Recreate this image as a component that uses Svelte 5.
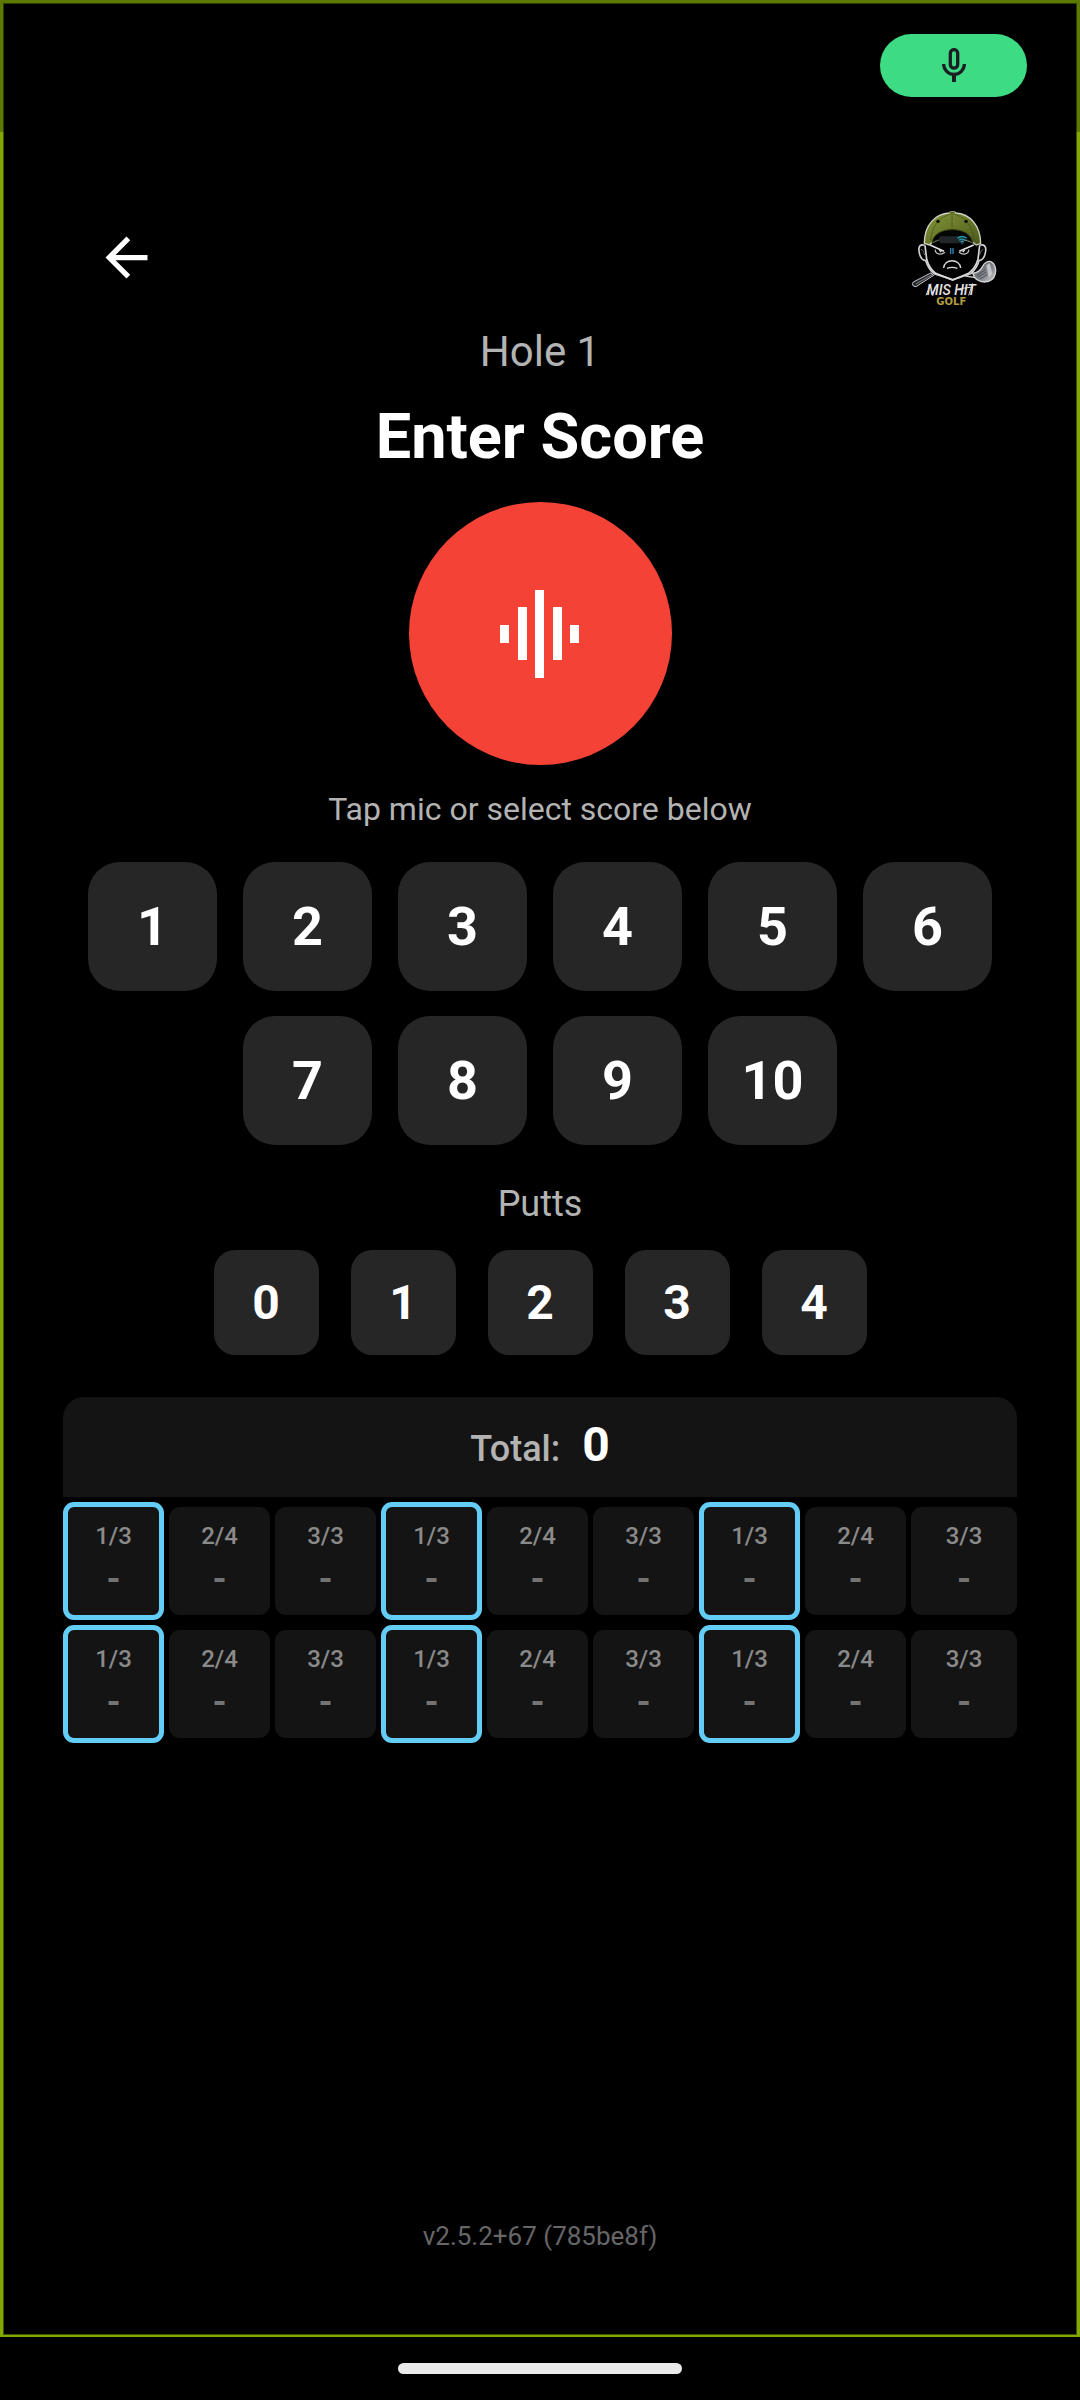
<script lang="ts">
	const scores = [1, 2, 3, 4, 5, 6, 7, 8, 9, 10];
	const puttOptions = [0, 1, 2, 3, 4];
	const version = 'v2.5.2+67 (785be8f)';

	// position on the card / par, repeated for each group of three holes
	const group = ['1/3', '2/4', '3/3'];
	const nine = [...group, ...group, ...group];
	const rows = [nine, nine];

	let score = $state<number | null>(null);
	let putts = $state<number | null>(null);
	let total = $derived(score ?? 0);
</script>

<div class="screen">
	<div class="frame">
		<div class="status-bar">
			<div class="mic-pill">
				<svg viewBox="0 0 24 36" width="24" height="36" fill="none" stroke="#1b1f23" stroke-width="3.3">
					<rect x="8.3" y="1.6" width="7.4" height="18.5" rx="3.7" />
					<path d="M1.6 16a10.4 10.4 0 0 0 20.8 0" />
					<path d="M12 27v7" stroke-width="4" />
				</svg>
			</div>
		</div>

		<main>
			<header>
				<button type="button" class="back" aria-label="Back">
					<svg viewBox="0 0 24 24" width="63" height="63" fill="#fff">
						<path d="M20 11H7.830l5.590-5.590L12 4l-8 8 8 8 1.410-1.410L7.830 13H20v-2z" />
					</svg>
				</button>

				<svg class="logo" viewBox="30 30 315 315" width="105" height="105" role="img" aria-label="Mis Hit Golf">
					<defs>
						<linearGradient id="cap" x1="0" y1="0" x2="1" y2="1">
							<stop offset="0" stop-color="#84973a" />
							<stop offset="0.5" stop-color="#69792a" />
							<stop offset="1" stop-color="#4a581a" />
						</linearGradient>
						<linearGradient id="club" x1="0" y1="0" x2="1" y2="1">
							<stop offset="0" stop-color="#55585e" />
							<stop offset="0.6" stop-color="#85888e" />
							<stop offset="1" stop-color="#d8d8da" />
						</linearGradient>
					</defs>

					<!-- golf club behind the head -->
					<path d="M70 261l52-27 9 7-53 34-8-2-3-7z" fill="#24262a" stroke="#c8c8c8" stroke-width="3" />
					<path d="M78 267l48-28" stroke="#696d73" stroke-width="4" />
					<path d="M226 243l30 5M232 233l24 2" stroke="#c8c8c8" stroke-width="4" />
					<path d="M249 235c13-2 23-10 29-21 5-11 16-17 25-14 12 5 16 22 13 36-4 17-17 25-33 25-15 0-31-9-34-26z" fill="url(#club)" stroke="#d4d4d4" stroke-width="4" />
					<path d="M289 211l10-6 8 31-10 14z" fill="#c4c5c9" />
					<path d="M260 242l26-18M263 247l25-15M270 252l22-13" stroke="#34373d" stroke-width="2" />

					<!-- head and ears -->
					<path d="M104 151c-13-5-19 4-17 17 2 16 8 28 20 29 5 15 13 29 25 39l56 18 54-18c13-11 21-25 25-39 12-1 18-13 20-29 2-14-5-22-18-17" fill="#000" stroke="#cfcfcf" stroke-width="5" stroke-linejoin="round" />
					<path d="M105 151l5 42c5 19 14 32 27 42l51 20 48-20c14-11 23-24 28-42l5-42" fill="none" stroke="#d7d7d7" stroke-width="5" />
					<path d="M93 163c5 0 8 7 11 17M280 163c-5 0-8 7-11 17" fill="none" stroke="#999" stroke-width="2" />

					<!-- backwards cap -->
					<path d="M103 145C103 89 137 56 178 54c1-5 18-5 19 0 43 2 74 38 75 91l-13 5c-16-13-37-20-73-20-35 0-55 7-69 20z" fill="url(#cap)" stroke="#d0d2c5" stroke-width="4" />
					<path d="M186 56v61M180 58c-34 9-55 39-58 79M194 58c35 10 55 40 58 79" fill="none" stroke="#354016" stroke-width="2" stroke-dasharray="5 2" />
					<path d="M126 143c5-27 30-39 61-39 34 0 57 15 61 39-18-11-41-14-62-14s-44 4-60 14z" fill="#050706" stroke="#303b12" stroke-width="3" />
					<path d="M177 55c2-7 17-7 19 0z" fill="#59671d" />
					<circle cx="144" cy="79" r="5" fill="#080a04" />
					<circle cx="228" cy="79" r="5" fill="#080a04" />
					<path d="M150 124h65l9 21h-73q-8-10-1-21z" fill="#20252a" />
					<path d="M202 130c9-7 19-7 28 0M207 136c6-5 12-5 18 0M212 141c3-3 6-3 9 0" fill="none" stroke="#249bb2" stroke-width="4" />
					<circle cx="216" cy="146" r="2" fill="#29a4bd" />

					<!-- face -->
					<path d="M120 150l42 19M251 150l-43 19" stroke="#e2e2e2" stroke-width="5" />
					<path d="M136 164c-1 14 17 17 29 8M236 164c1 14-17 17-29 8" fill="none" stroke="#bababa" stroke-width="4" />
					<path d="M148 166l6 5M224 166l-6 5" stroke="#eee" stroke-width="4" />
					<path d="M182 159v18M189 159v18" stroke="#3388b5" stroke-width="4" />
					<path d="M161 219c2-29 48-29 51 0M171 220q15-6 31 0" fill="none" stroke="#ddd" stroke-width="4" />

					<text class="logo-name" x="184" y="299" text-anchor="middle">MIS HIT</text>
					<path d="M108 301l15-35M248 265l-12 36M202 282l45-6M136 274l-8 29" stroke="#ddd" stroke-width="3" />
					<text class="logo-golf" x="184" y="330" text-anchor="middle">GOLF</text>
				</svg>
			</header>

			<p class="hole">Hole 1</p>
			<h1>Enter Score</h1>

			<button type="button" class="mic" aria-label="Speak score">
				<svg viewBox="0 0 80 88" width="80" height="88" fill="#fff">
					<path d="M0 35h9v18H0zM18 17h9v53h-9zM35 0h9v88h-9zM53 17h9v53h-9zM70 35h9v18h-9z" />
				</svg>
			</button>

			<p class="hint">Tap mic or select score below</p>

			<div class="scores">
				{#each scores as n}
					<button type="button" aria-pressed={score === n} onclick={() => (score = n)}>{n}</button>
				{/each}
			</div>

			<h2>Putts</h2>

			<div class="putts">
				{#each puttOptions as n}
					<button type="button" aria-pressed={putts === n} onclick={() => (putts = n)}>{n}</button>
				{/each}
			</div>

			<section class="card">
				<div class="total">
					<span>Total:</span>
					<strong>{total}</strong>
				</div>
				{#each rows as row}
					<ul>
						{#each row as label, i}
							<li class:active={i % 3 === 0}>
								<span class="label">{label}</span>
								<span class="value">-</span>
							</li>
						{/each}
					</ul>
				{/each}
			</section>
		</main>

		<footer>{version}</footer>
	</div>

	<div class="nav-bar">
		<div class="handle"></div>
	</div>
</div>

<style>
	:global(body) {
		background: #000;
	}

	.screen {
		min-height: 100vh;
		display: flex;
		flex-direction: column;
		background: #000;
		color: #fff;
		font-family: Roboto, 'Liberation Sans', sans-serif;
	}

	.frame {
		position: relative;
		flex: 1;
		display: flex;
		flex-direction: column;
		border: 3px solid #80a800;
		border-bottom-width: 2px;
		box-shadow: inset 0 0 0 1px #405400;
	}

	/* translucent system bar, it also dims the top of the frame */
	.status-bar {
		position: absolute;
		inset: -3px -3px auto;
		height: 132px;
		box-sizing: border-box;
		padding: 34px 53px 0;
		display: flex;
		justify-content: flex-end;
		background: rgba(0, 0, 0, 0.27);
	}

	.mic-pill {
		width: 147px;
		height: 63px;
		border-radius: 32px;
		background: #3ddc84;
		display: flex;
		align-items: center;
		justify-content: center;
	}

	main {
		display: flex;
		flex-direction: column;
		align-items: center;
		padding: 202px 60px 0;
	}

	header {
		align-self: stretch;
		display: flex;
		align-items: center;
		justify-content: space-between;
		padding: 0 12px 0 32px;
	}

	button {
		padding: 0;
		border: none;
		color: inherit;
		font: inherit;
		cursor: pointer;
	}

	svg {
		display: block;
	}

	.back {
		background: none;
	}

	.logo-name {
		fill: #e4e4e4;
		font-size: 42px;
		font-style: italic;
		font-weight: 500;
	}

	.logo-golf {
		fill: #b29b43;
		font-family: 'DejaVu Sans', sans-serif;
		font-size: 30px;
		font-weight: 700;
	}

	p,
	h1,
	h2,
	ul {
		margin: 0;
	}

	.hole {
		margin-top: 17px;
		font-size: 42px;
		line-height: 50px;
		color: #b3b3b3;
	}

	h1 {
		margin-top: 23px;
		font-size: 63px;
		line-height: 74px;
		font-weight: 700;
	}

	.mic {
		width: 263px;
		height: 263px;
		margin-top: 28px;
		border-radius: 50%;
		background: #f44336;
		display: flex;
		align-items: center;
		justify-content: center;
	}

	.hint {
		margin-top: 25px;
		font-size: 32px;
		line-height: 38px;
		color: #b3b3b3;
	}

	.scores {
		display: flex;
		flex-wrap: wrap;
		justify-content: center;
		gap: 25px 26px;
		margin-top: 34px;
	}

	.scores button {
		width: 129px;
		height: 129px;
		border-radius: 32px;
		background: #262626;
		font-size: 54px;
		font-weight: 700;
	}

	h2 {
		margin-top: 38px;
		font-size: 36px;
		line-height: 42px;
		font-weight: 400;
		color: #b3b3b3;
	}

	.putts {
		display: flex;
		gap: 32px;
		margin-top: 25px;
	}

	.putts button {
		width: 105px;
		height: 105px;
		border-radius: 21px;
		background: #262626;
		font-size: 48px;
		font-weight: 700;
	}

	.card {
		align-self: stretch;
		margin-top: 42px;
	}

	.total {
		display: flex;
		align-items: baseline;
		justify-content: center;
		gap: 22px;
		padding: 20px 0;
		border-radius: 21px 21px 0 0;
		background: #141414;
		line-height: 56px;
	}

	.total span {
		font-size: 36px;
		font-weight: 500;
		color: #b3b3b3;
	}

	.total strong {
		font-size: 48px;
	}

	ul {
		display: grid;
		grid-template-columns: repeat(9, 1fr);
		margin-top: 5px;
		padding: 0;
		list-style: none;
	}

	li {
		display: flex;
		flex-direction: column;
		align-items: center;
		box-sizing: border-box;
		height: 108px;
		margin: 5px 5px 5px 0;
		padding-top: 15px;
		border-radius: 11px;
		background: #141414;
	}

	li:last-child {
		margin-right: 0;
	}

	li.active {
		height: 118px;
		margin-top: 0;
		margin-bottom: 0;
		border: 5px solid #64cdf5;
	}

	.label {
		font-size: 24px;
		line-height: 28px;
		font-weight: 500;
		color: #8a8a8a;
	}

	.value {
		margin-top: 10px;
		font-size: 36px;
		line-height: 38px;
		font-weight: 700;
		color: #737373;
	}

	footer {
		margin-top: auto;
		padding-bottom: 83px;
		font-size: 26px;
		line-height: 32px;
		text-align: center;
		color: #666;
	}

	.nav-bar {
		display: flex;
		align-items: center;
		justify-content: center;
		height: 63px;
	}

	.handle {
		width: 284px;
		height: 11px;
		border-radius: 6px;
		background: #ebebeb;
	}
</style>
